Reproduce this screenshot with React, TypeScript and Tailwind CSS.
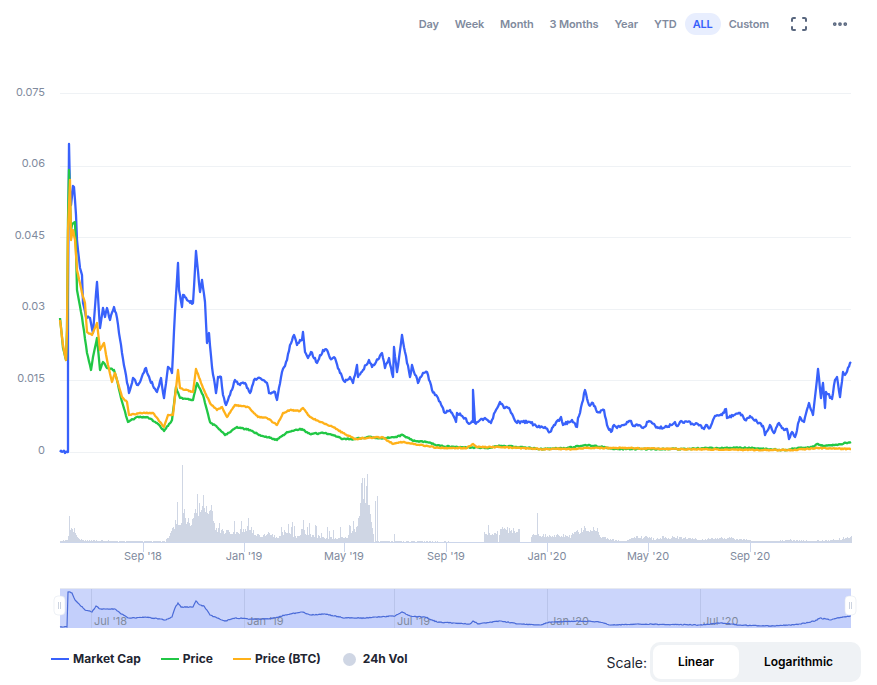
import { MoreHorizontal } from 'lucide-react';

type Pt = [number, number];

const RANGES = ['Day', 'Week', 'Month', '3 Months', 'Year', 'YTD', 'ALL', 'Custom'];

const Y_TICKS = [
  { label: '0.075', y: 93, base: 96 },
  { label: '0.06', y: 166, base: 167 },
  { label: '0.045', y: 237, base: 239 },
  { label: '0.03', y: 309, base: 310 },
  { label: '0.015', y: 380, base: 382 },
  { label: '0', y: 452, base: 454 },
];

const X_TICKS = [
  { label: "Sep '18", x: 143 },
  { label: "Jan '19", x: 244 },
  { label: "May '19", x: 344 },
  { label: "Sep '19", x: 446 },
  { label: "Jan '20", x: 547 },
  { label: "May '20", x: 648 },
  { label: "Sep '20", x: 750 },
];

const NAV_TICKS = [
  { label: "Jul '18", x: 91 },
  { label: "Jan '19", x: 244 },
  { label: "Jul '19", x: 394 },
  { label: "Jan '20", x: 547 },
  { label: "Jul '20", x: 700 },
];

const MARKET_CAP: Pt[] = [
  [60, 452], [68, 452], [68, 300], [69, 144], [70, 190], [71, 205], [72, 196], [73, 186], [74, 187], [75, 200], [76, 215], [77, 240], [78, 250], [80, 268], [82, 275],
  [83, 303], [86, 317], [90, 318], [93, 333], [94, 320], [97, 282], [100, 328], [103, 308], [105, 317], [107, 308], [110, 320], [114, 307], [117, 318], [122, 353], [125, 370], [129, 393], [133, 378], [138, 385], [146, 368], [150, 380], [157, 392], [161, 378], [164, 398], [168, 367], [172, 373], [175, 312], [178, 263], [179, 290], [182, 307], [183, 295], [187, 300], [193, 303], [196, 251], [200, 292], [202, 280], [205, 302], [207, 343], [209, 333], [212, 367], [216, 393], [218, 377], [221, 377], [223, 395], [226, 405], [230, 395], [235, 380], [240, 385], [245, 383], [250, 393], [254, 380], [260, 378], [267, 383], [269, 393], [275, 392], [277, 400], [282, 372], [287, 360], [290, 345], [294, 335], [297, 345], [300, 340],
  [302, 340], [303, 332], [305, 352], [308, 358], [311, 352], [317, 363], [323, 350], [327, 350], [330, 358], [335, 358], [340, 373], [345, 382], [350, 377], [353, 383], [357, 365], [358, 377], [363, 370], [369, 360], [372, 367], [376, 362], [382, 353], [385, 368], [389, 358], [393, 377], [394, 347], [397, 372], [399, 358], [402, 335], [405, 352], [410, 377], [412, 365], [418, 383], [423, 373], [427, 372], [432, 390], [438, 398], [445, 413], [450, 410], [456, 422], [457, 413], [465, 418], [468, 423], [473, 422], [473, 390], [475, 423], [480, 420], [485, 418], [491, 423], [495, 412], [500, 402], [505, 408], [509, 408], [516, 422], [523, 422], [530, 422], [537, 427], [545, 427], [550, 432], [555, 425], [561, 417], [563, 425], [572, 420], [577, 427], [578, 418],
  [580, 413], [585, 390], [589, 405], [593, 403], [597, 412], [604, 410], [607, 425], [611, 432], [614, 425], [617, 428], [630, 421], [634, 426], [639, 425], [643, 428], [649, 421], [658, 428], [667, 427], [675, 422], [677, 426], [681, 421], [700, 425], [704, 429], [706, 425], [710, 428], [715, 416], [722, 415], [726, 409], [727, 418], [734, 415], [740, 413], [745, 420], [750, 416], [759, 423], [763, 426], [765, 435], [770, 425], [774, 433], [779, 423], [784, 430], [787, 429], [789, 439], [792, 432], [795, 437], [800, 417], [804, 422], [809, 403], [813, 415], [818, 369], [821, 398], [823, 383], [825, 408], [826, 392], [832, 399], [835, 380], [837, 377], [840, 397], [843, 372], [845, 375], [851, 362],
];

const PRICE: Pt[] = [
  [60, 318], [63, 348], [66, 360], [67, 330], [68, 220], [69, 170], [71, 230], [72, 225], [75, 222], [76, 250], [77, 290], [82, 317], [87, 353], [91, 370], [93, 357], [97, 338], [100, 370], [103, 362], [107, 368], [114, 370], [117, 380], [121, 398], [128, 422], [137, 417], [147, 417], [157, 423], [164, 431], [172, 420], [176, 387], [180, 398], [193, 400], [197, 383], [203, 395], [210, 422], [217, 427], [225, 435], [237, 427], [250, 430], [260, 435], [277, 440], [287, 432], [295, 430], [302, 429], [310, 434], [323, 433], [333, 435], [343, 439], [355, 439], [370, 437], [380, 438], [387, 438], [395, 437], [403, 435], [413, 441], [427, 442], [440, 446], [460, 447], [487, 448], [500, 446], [520, 447], [540, 449], [567, 448], [585, 445], [604, 447], [614, 449], [677, 449], [717, 448], [750, 448], [784, 450], [800, 448], [812, 447], [818, 444], [824, 446], [837, 445], [851, 442],
];

const PRICE_BTC: Pt[] = [
  [60, 320], [63, 345], [66, 360], [67, 330], [68, 230], [70, 180], [71, 240], [73, 230], [75, 240], [77, 270], [82, 293], [85, 303], [87, 332], [92, 335], [97, 323], [100, 350], [104, 343], [108, 365], [112, 382], [115, 373], [118, 383], [122, 397], [127, 402], [129, 415], [143, 413], [153, 413], [164, 427], [168, 415], [173, 415], [178, 370], [180, 388], [193, 392], [196, 369], [203, 388], [210, 403], [217, 410], [222, 407], [227, 417], [235, 405], [248, 407], [258, 417], [267, 418], [277, 425], [283, 413], [290, 410], [300, 411], [303, 408], [310, 417], [320, 422], [333, 427], [343, 433], [355, 439], [367, 438], [382, 437], [393, 444], [403, 442], [420, 445], [440, 448], [467, 448], [473, 444], [477, 447], [500, 447], [540, 449], [577, 449], [587, 448], [610, 448], [627, 448], [677, 449], [767, 450], [794, 450], [817, 448], [851, 449],
];

const NAV_LINE: Pt[] = [
  [60, 627], [67, 627], [68, 592], [70, 592], [72, 593], [75, 600], [78, 603], [85, 610], [92, 612], [96, 606], [100, 609], [115, 609], [120, 613], [128, 618], [135, 618], [145, 617], [160, 619], [165, 620], [172, 617], [175, 608], [178, 603], [181, 607], [193, 607], [196, 601], [200, 605], [204, 606], [210, 615], [217, 618], [225, 621], [235, 618], [250, 619], [262, 619], [275, 618], [285, 615], [302, 612], [310, 615], [325, 614], [345, 618], [365, 618], [375, 617], [395, 616], [402, 612], [410, 616], [425, 617], [437, 622], [470, 624], [473, 621], [478, 624], [500, 621], [520, 624], [540, 625], [550, 622], [580, 621], [600, 622], [610, 625], [640, 624], [700, 625], [720, 623], [740, 625], [770, 626], [790, 625], [800, 624], [815, 621], [820, 618], [830, 620], [837, 618], [851, 616],
];

const VOL_ENVELOPE: Pt[] = [
  [60, 3], [67, 3], [68, 8], [70, 13], [75, 9], [78, 5], [82, 3], [120, 2], [165, 2], [168, 6], [172, 14], [175, 20], [178, 24], [182, 26], [190, 20], [195, 30], [198, 33], [205, 32], [212, 30], [215, 14], [225, 11], [240, 12], [250, 15], [255, 8], [270, 9], [277, 5], [283, 11], [295, 7], [310, 8], [325, 5], [345, 5], [350, 10], [355, 15], [359, 28], [361, 55], [367, 55], [369, 35], [372, 15], [374, 1], [380, 2], [480, 1], [483, 1], [484, 11], [497, 11], [498, 1], [499, 8], [500, 16], [510, 13], [519, 12], [520, 1], [530, 1], [531, 8], [570, 7], [575, 10], [585, 15], [590, 13], [598, 13], [600, 8], [605, 5], [620, 2], [626, 2], [635, 6], [650, 6], [655, 3], [660, 6], [690, 5], [700, 3], [720, 6], [740, 4], [755, 2], [775, 2], [790, 3], [810, 2], [830, 3], [840, 4], [851, 7],
];

const VOL_SPIKES: Pt[] = [
  [69, 27], [74, 15], [177, 41], [182, 78], [184, 34], [197, 49], [199, 40], [203, 48], [211, 38], [219, 20], [234, 22], [241, 22], [248, 25], [281, 16], [291, 16], [303, 23], [361, 60], [364, 65], [367, 69], [375, 42], [377, 47], [394, 9], [488, 18], [537, 30],
];

// small seeded noise so the lines are not too clean
function makeRand(seed: number) {
  let s = seed;
  return () => {
    s = (s * 16807) % 2147483647;
    return s / 2147483647;
  };
}

function lerp(points: Pt[], x: number) {
  for (let i = 1; i < points.length; i++) {
    if (x <= points[i][0]) {
      const [x0, y0] = points[i - 1];
      const [x1, y1] = points[i];
      return x1 === x0 ? y1 : y0 + ((y1 - y0) * (x - x0)) / (x1 - x0);
    }
  }
  return points[points.length - 1][1];
}

function roughen(points: Pt[], amount: number, seed: number) {
  const rand = makeRand(seed);
  const out: string[] = [];
  points.forEach(([x, y], i) => {
    out.push(`${x},${y}`);
    const next = points[i + 1];
    if (!next) return;
    for (let px = x + 1; px < next[0]; px++) {
      const py = y + ((next[1] - y) * (px - x)) / (next[0] - x);
      out.push(`${px},${(py + (rand() - 0.5) * amount).toFixed(1)}`);
    }
  });
  return out.join(' ');
}

function buildVolume() {
  const rand = makeRand(77);
  const bars: string[] = [];
  for (let x = 60; x <= 851; x++) {
    const base = lerp(VOL_ENVELOPE, x);
    let h = base * (0.72 + rand() * 0.5);
    if (x > 284 && x < 360 && rand() > 0.8) h += 4 + rand() * 8;
    const spike = VOL_SPIKES.find((s) => s[0] === x);
    if (spike) h = spike[1];
    bars.push(`M${x + 0.5} 543V${Math.round(543 - Math.max(h, 1))}`);
  }
  return bars.join('');
}

const VOLUME_PATH = buildVolume();
const CAP_LINE = roughen(MARKET_CAP, 2.8, 11);
const PRICE_LINE = roughen(PRICE, 1.3, 23);
const BTC_LINE = roughen(PRICE_BTC, 1.1, 37);
const NAV_POINTS = roughen(NAV_LINE, 0.8, 51);

function NavHandle({ x }: { x: number }) {
  return (
    <g>
      <rect x={x} y={596} width={11} height={19} rx={4} fill="#ffffff" stroke="#e3e7f0" strokeWidth={0.6} />
      <path d={`M${x + 4.5} 602V609M${x + 6.5} 602V609`} stroke="#ccd3e0" strokeWidth={1} />
    </g>
  );
}

function PriceChart() {
  return (
    <svg viewBox="0 48 877 590" width={877} height={590} className="block font-['Inter',sans-serif]">
      {Y_TICKS.map((t) => (
        <g key={t.label}>
          <line x1={60} x2={851} y1={t.y + 0.5} y2={t.y + 0.5} stroke="#eff2f5" />
          <text x={45} y={t.base} textAnchor="end" className="fill-[#808a9d] text-[11px]">
            {t.label}
          </text>
        </g>
      ))}

      <polyline points={CAP_LINE} fill="none" stroke="#3861fb" strokeWidth={2.3} strokeLinejoin="round" />
      <polyline points={PRICE_LINE} fill="none" stroke="#21c745" strokeWidth={2.3} strokeLinejoin="round" />
      <polyline points={BTC_LINE} fill="none" stroke="#ffb119" strokeWidth={2.3} strokeLinejoin="round" />

      <path d={VOLUME_PATH} stroke="#cfd6e4" strokeWidth={1} fill="none" />
      <line x1={60} x2={851} y1={542.5} y2={542.5} stroke="#ccd6eb" />
      {X_TICKS.map((t) => (
        <g key={t.label}>
          <line x1={t.x + 0.5} x2={t.x + 0.5} y1={543} y2={552} stroke="#ccd6eb" />
          <text x={t.x} y={560} textAnchor="middle" className="fill-[#808a9d] text-[11px]">
            {t.label}
          </text>
        </g>
      ))}

      <rect x={60} y={589} width={791} height={39} fill="#cbd5fb" />
      <line x1={60} x2={851} y1={588.5} y2={588.5} stroke="#e6e9f0" />
      <polygon points={`${NAV_POINTS} 851,628 60,628`} fill="#3861fb" fillOpacity={0.05} />
      {NAV_TICKS.map((t) => (
        <g key={t.label}>
          <line x1={t.x + 0.5} x2={t.x + 0.5} y1={589} y2={628} stroke="#b9c4ea" />
          <text x={t.x + 3} y={625} className="fill-[#808a9d] text-[11px]">
            {t.label}
          </text>
        </g>
      ))}
      <polyline points={NAV_POINTS} fill="none" stroke="#4a6bd8" strokeWidth={1.2} />
      <NavHandle x={54} />
      <NavHandle x={845} />
    </svg>
  );
}

function LegendItem({ label, color }: { label: string; color: string }) {
  return (
    <div className="flex items-center gap-1">
      <span className={`h-[2px] w-[18px] ${color}`} />
      <span className="text-[12px] font-bold text-[#222531]">{label}</span>
    </div>
  );
}

export default function App() {
  return (
    <div className="h-[685px] w-[877px] bg-white font-['Inter',sans-serif]">
      <div className="flex h-[48px] items-center justify-end pr-[28px]">
        {RANGES.map((r) => (
          <button
            key={r}
            className={
              r === 'ALL'
                ? 'h-[22px] rounded-full bg-[#e8eefe] px-2 text-[11px] font-semibold tracking-[-0.15px] text-[#3861fb]'
                : 'h-[22px] px-2 text-[11px] font-semibold tracking-[-0.15px] text-[#808a9d]'
            }
          >
            {r}
          </button>
        ))}
        <svg width="16" height="14" viewBox="0 0 16 14" fill="none" stroke="#58667e" strokeWidth="2" strokeLinecap="round" className="ml-[14px]">
          <path d="M1 4V2.5A1.5 1.5 0 0 1 2.5 1H4M12 1h1.5A1.5 1.5 0 0 1 15 2.5V4M15 10v1.5a1.5 1.5 0 0 1-1.5 1.5H12M4 13H2.5A1.5 1.5 0 0 1 1 11.5V10" />
        </svg>
        <MoreHorizontal className="ml-[24px] h-[18px] w-[18px] text-[#58667e]" strokeWidth={3} />
      </div>

      <PriceChart />

      <div className="mt-[4px] flex h-[40px] items-center justify-between pl-[51px] pr-[16px]">
        <div className="flex items-center gap-5 pb-[6px]">
          <LegendItem label="Market Cap" color="bg-[#3861fb]" />
          <LegendItem label="Price" color="bg-[#21c745]" />
          <LegendItem label="Price (BTC)" color="bg-[#ffb119]" />
          <div className="ml-[2px] flex items-center gap-[7px]">
            <span className="h-[13px] w-[13px] rounded-full bg-[#cfd6e4]" />
            <span className="text-[12px] font-bold text-[#222531]">24h Vol</span>
          </div>
        </div>
        <div className="flex items-center gap-[3px]">
          <span className="text-[14px] text-[#222531]">Scale:</span>
          <div className="flex h-[40px] w-[211px] items-center rounded-[10px] bg-[#eff2f5] p-[3px]">
            <button className="h-full w-[86px] rounded-lg bg-white text-[12px] font-semibold text-black">Linear</button>
            <button className="h-full flex-1 text-[12px] font-semibold text-black">Logarithmic</button>
          </div>
        </div>
      </div>
    </div>
  );
}
